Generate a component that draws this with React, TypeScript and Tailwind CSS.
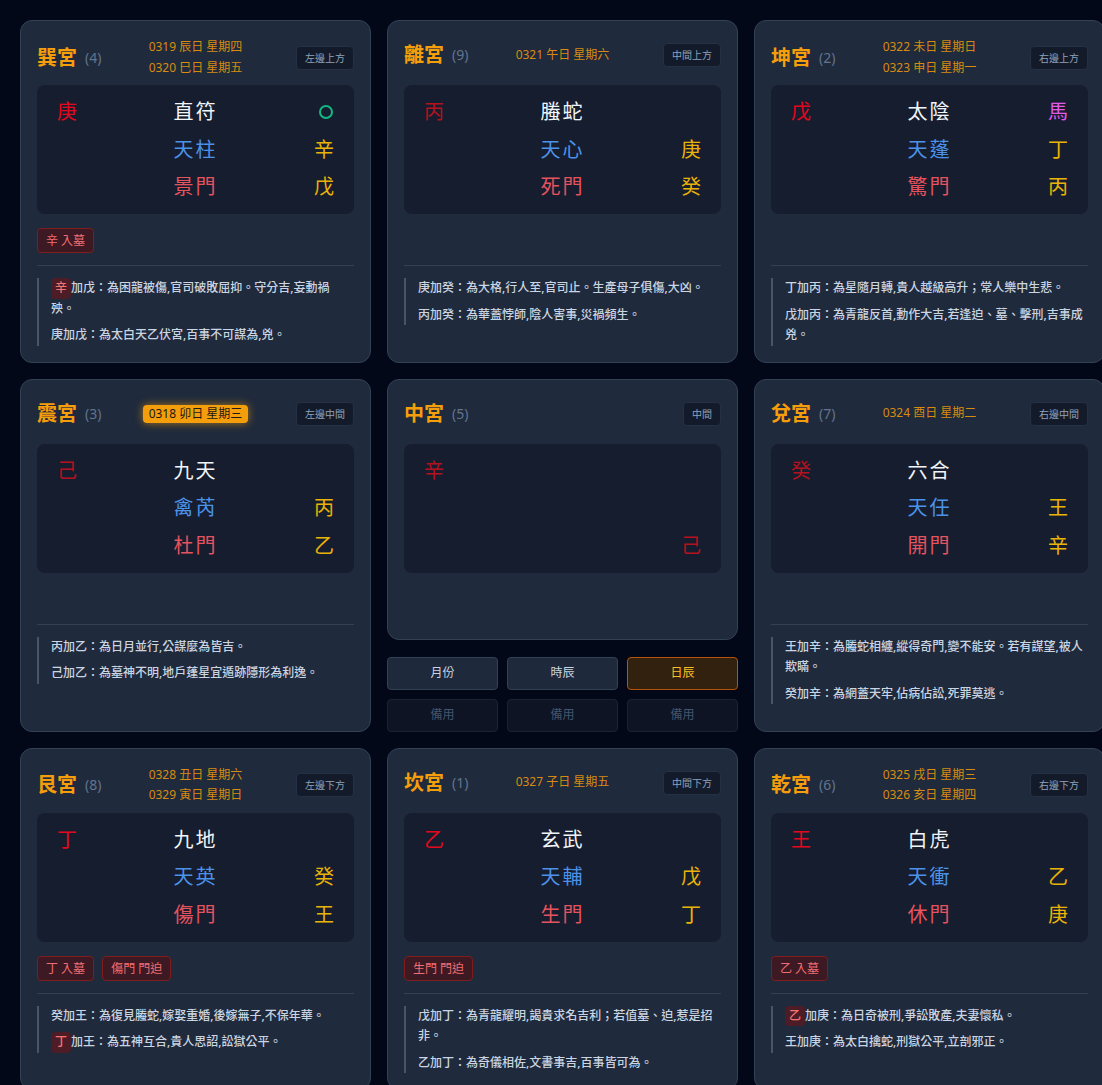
import React from "react"

type Note = { hl?: string; text: string }
type Palace = {
  name: string
  num: number
  dates: string[]
  today?: boolean
  pos: string
  stem: string
  stemDark?: boolean
  deity: string
  star: string
  door: string
  mark?: "circle" | "horse"
  upper: string
  lower: string
  tags: string[]
  notes: Note[]
}

const palaces: Palace[] = [
  {
    name: "巽宮", num: 4, dates: ["0319 辰日 星期四", "0320 巳日 星期五"], pos: "左邊上方",
    stem: "庚", deity: "直符", star: "天柱", door: "景門", mark: "circle", upper: "辛", lower: "戊",
    tags: ["辛 入墓"],
    notes: [
      { hl: "辛", text: "加戊：為困龍被傷,官司破敗屈抑。守分吉,妄動禍殃。" },
      { text: "庚加戊：為太白天乙伏宮,百事不可謀為,兇。" },
    ],
  },
  {
    name: "離宮", num: 9, dates: ["0321 午日 星期六"], pos: "中間上方",
    stem: "丙", stemDark: true, deity: "螣蛇", star: "天心", door: "死門", upper: "庚", lower: "癸",
    tags: [],
    notes: [
      { text: "庚加癸：為大格,行人至,官司止。生產母子俱傷,大凶。" },
      { text: "丙加癸：為華蓋悖師,陰人害事,災禍頻生。" },
    ],
  },
  {
    name: "坤宮", num: 2, dates: ["0322 未日 星期日", "0323 申日 星期一"], pos: "右邊上方",
    stem: "戊", deity: "太陰", star: "天蓬", door: "驚門", mark: "horse", upper: "丁", lower: "丙",
    tags: [],
    notes: [
      { text: "丁加丙：為星隨月轉,貴人越級高升；常人樂中生悲。" },
      { text: "戊加丙：為青龍反首,動作大吉,若逢迫、墓、擊刑,吉事成兇。" },
    ],
  },
  {
    name: "震宮", num: 3, dates: ["0318 卯日 星期三"], today: true, pos: "左邊中間",
    stem: "己", stemDark: true, deity: "九天", star: "禽芮", door: "杜門", upper: "丙", lower: "乙",
    tags: [],
    notes: [
      { text: "丙加乙：為日月並行,公謀麼為皆吉。" },
      { text: "己加乙：為墓神不明,地戶蓬星宜遁跡隱形為利逸。" },
    ],
  },
  {
    name: "兌宮", num: 7, dates: ["0324 酉日 星期二"], pos: "右邊中間",
    stem: "癸", stemDark: true, deity: "六合", star: "天任", door: "開門", upper: "王", lower: "辛",
    tags: [],
    notes: [
      { text: "王加辛：為螣蛇相纏,縱得奇門,變不能安。若有謀望,被人欺瞞。" },
      { text: "癸加辛：為網蓋天牢,佔病佔訟,死罪莫逃。" },
    ],
  },
  {
    name: "艮宮", num: 8, dates: ["0328 丑日 星期六", "0329 寅日 星期日"], pos: "左邊下方",
    stem: "丁", deity: "九地", star: "天英", door: "傷門", upper: "癸", lower: "王",
    tags: ["丁 入墓", "傷門 門迫"],
    notes: [
      { text: "癸加王：為復見螣蛇,嫁娶重婚,後嫁無子,不保年華。" },
      { hl: "丁", text: "加王：為五神互合,貴人思詔,訟獄公平。" },
    ],
  },
  {
    name: "坎宮", num: 1, dates: ["0327 子日 星期五"], pos: "中間下方",
    stem: "乙", deity: "玄武", star: "天輔", door: "生門", upper: "戊", lower: "丁",
    tags: ["生門 門迫"],
    notes: [
      { text: "戊加丁：為青龍耀明,謁貴求名吉利；若值墓、迫,惹是招非。" },
      { text: "乙加丁：為奇儀相佐,文書事吉,百事皆可為。" },
    ],
  },
  {
    name: "乾宮", num: 6, dates: ["0325 戌日 星期三", "0326 亥日 星期四"], pos: "右邊下方",
    stem: "王", deity: "白虎", star: "天衝", door: "休門", upper: "乙", lower: "庚",
    tags: ["乙 入墓"],
    notes: [
      { hl: "乙", text: "加庚：為日奇被刑,爭訟敗產,夫妻懷私。" },
      { text: "王加庚：為太白擒蛇,刑獄公平,立剖邪正。" },
    ],
  },
]

function Header({ name, num, dates = [], today, pos }: { name: string; num: number; dates?: string[]; today?: boolean; pos: string }) {
  return (
    <div className="mb-3 grid h-9 grid-cols-[1fr_auto_1fr] items-center">
      <div className="flex items-center">
        <span className="text-xl font-bold text-[#f59e0b]">{name}</span>
        <span className="ml-2 text-sm text-slate-500">({num})</span>
      </div>
      {today ? (
        <div className="h-[18px] rounded-[4px] bg-[#f59e0b] px-1.5 text-xs leading-[18px] text-[#1c1917] shadow-[0_0_8px_rgba(245,158,11,0.65)]">
          {dates[0]}
        </div>
      ) : (
        <div className="flex flex-col text-xs leading-[20.5px] text-[#d98a10]">
          {dates.map((d) => (
            <span key={d}>{d}</span>
          ))}
        </div>
      )}
      <div className="justify-self-end">
        <span className="block h-6 rounded-[4px] border border-[#243044] bg-[#131b2b] px-2 text-[10px] leading-[22px] text-slate-400">
          {pos}
        </span>
      </div>
    </div>
  )
}

function stemColor(dark?: boolean) {
  return dark ? "text-[#b3121f]" : "text-[#e3081d]"
}

function PalaceCard({ p }: { p: Palace }) {
  return (
    <div className="rounded-xl border border-[#334155] bg-[#1f2a3c] p-4">
      <Header name={p.name} num={p.num} dates={p.dates} today={p.today} pos={p.pos} />

      <div className="grid grid-cols-3 gap-y-[9.5px] rounded-lg bg-[#161d2e] px-5 py-[13px] text-xl leading-7">
        <div className={stemColor(p.stemDark)}>{p.stem}</div>
        <div className="text-center tracking-widest text-[#f1f5f9]">{p.deity}</div>
        <div className="flex items-center justify-end">
          {p.mark === "circle" && <span className="mr-[1px] block h-[14px] w-[14px] rounded-full border-2 border-[#10b981]" />}
          {p.mark === "horse" && <span className="text-[#e05ae6]">馬</span>}
        </div>

        <div />
        <div className="text-center tracking-widest text-[#4b92e8]">{p.star}</div>
        <div className="text-right text-[#eab308]">{p.upper}</div>

        <div />
        <div className="text-center tracking-widest text-[#e5535f]">{p.door}</div>
        <div className="text-right text-[#eab308]">{p.lower}</div>
      </div>

      <div className="mt-[14px] flex h-[25px] gap-2">
        {p.tags.map((t) => (
          <span
            key={t}
            className="h-[25px] rounded-[4px] border border-[#7f1d1d] bg-[#3d1a23] px-2 text-xs leading-[23px] text-[#f16d73]"
          >
            {t}
          </span>
        ))}
      </div>

      <div className="mt-3 border-t border-[#334155]" />

      <div className="mt-3 flex flex-col gap-1.5 border-l-2 border-[#475569] pl-3 pr-1 text-xs font-medium leading-[20.5px] text-[#cbd5e1]">
        {p.notes.map((n, i) => (
          <p key={i}>
            {n.hl && (
              <span className="inline-block rounded-[4px] bg-[#4c1d27] px-1 align-top leading-[20.5px] text-[#f87171]">
                {n.hl}
              </span>
            )}
            {n.text}
          </p>
        ))}
      </div>
    </div>
  )
}

function CenterColumn() {
  const cell = "h-7"
  return (
    <div className="flex flex-col">
      <div className="h-[261px] rounded-xl border border-[#334155] bg-[#1f2a3c] p-4">
        <Header name="中宮" num={5} pos="中間" />
        <div className="grid grid-cols-3 gap-y-[9.5px] rounded-lg bg-[#161d2e] px-5 py-[13px] text-xl leading-7">
          <div className={`${cell} text-[#b3121f]`}>辛</div>
          <div className={cell} />
          <div className={cell} />
          <div className={cell} />
          <div className={cell} />
          <div className={cell} />
          <div className={cell} />
          <div className={cell} />
          <div className={`${cell} text-right text-[#b3121f]`}>己</div>
        </div>
      </div>

      <div className="mt-[17px] grid grid-cols-3 gap-[9px] text-xs">
        <button className="h-[33px] rounded-[4px] border border-[#334155] bg-[#1e293b] text-slate-300">月份</button>
        <button className="h-[33px] rounded-[4px] border border-[#334155] bg-[#1e293b] text-slate-300">時辰</button>
        <button className="h-[33px] rounded-[4px] border border-[#b45309] bg-[#33210f] text-[#fbbf24]">日辰</button>
        <button className="h-[33px] rounded-[4px] border border-[#1a2335] bg-[#0e1424] text-slate-600">備用</button>
        <button className="h-[33px] rounded-[4px] border border-[#1a2335] bg-[#0e1424] text-slate-600">備用</button>
        <button className="h-[33px] rounded-[4px] border border-[#1a2335] bg-[#0e1424] text-slate-600">備用</button>
      </div>
    </div>
  )
}

export default function App() {
  return (
    <div className="h-screen overflow-hidden bg-[#030818] font-['Noto_Sans','Noto_Sans_CJK_TC',sans-serif]">
      <div className="grid w-max grid-cols-[351px_351px_351px] gap-x-4 gap-y-4 p-5">
        <PalaceCard p={palaces[0]} />
        <PalaceCard p={palaces[1]} />
        <PalaceCard p={palaces[2]} />
        <PalaceCard p={palaces[3]} />
        <CenterColumn />
        <PalaceCard p={palaces[4]} />
        <PalaceCard p={palaces[5]} />
        <PalaceCard p={palaces[6]} />
        <PalaceCard p={palaces[7]} />
      </div>
    </div>
  )
}
